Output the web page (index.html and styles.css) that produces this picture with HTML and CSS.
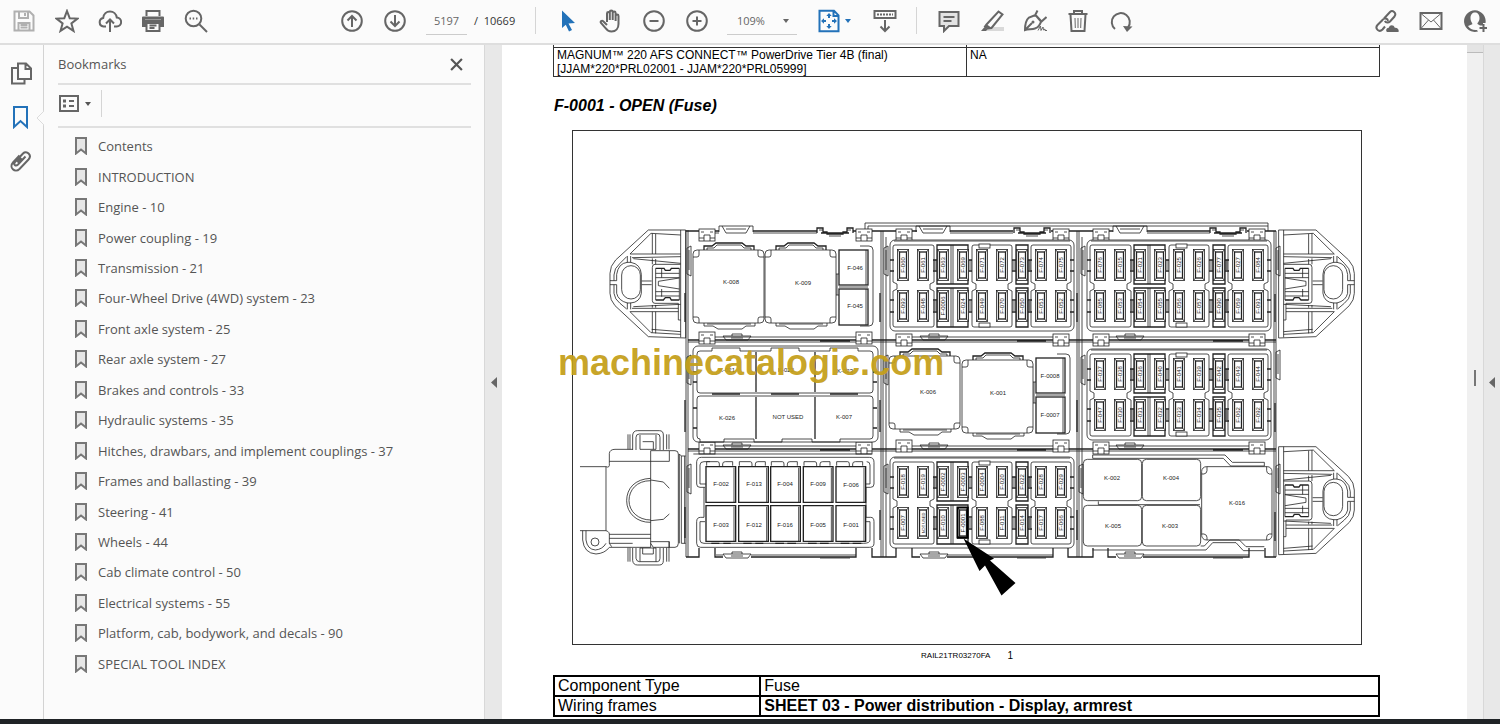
FILE: index.html
```html
<!DOCTYPE html>
<html lang="en">
<head>
<meta charset="utf-8">
<title>Service manual - Bookmarks</title>
<link rel="stylesheet" href="styles.css">
</head>
<body>
<header class="toolbar">
  <div class="group">
    <button class="tool faded" aria-label="Save"><svg class="icon" viewBox="0 0 24 24"><path d="M2.500 2.500h15l4 4v15h-19zM7 3v6h9V3M6.500 21v-7h11v7M13 4v3M8.500 16h7M8.500 18.500h7"/></svg></button>
    <button class="tool" aria-label="Star"><svg class="icon" viewBox="0 0 24 24"><path d="M12 2l2.700 7.200 7.800.4-6.100 4.800 2.100 7.500-6.500-4.300-6.500 4.300 2.100-7.500L1.500 9.600l7.800-.4z"/></svg></button>
    <button class="tool" aria-label="Upload"><svg class="icon" viewBox="0 0 24 24"><path d="M8 17.500H5.500a4.300 4.300 0 0 1-.3-8.500C5.500 5 8.500 2.500 12 2.500S18.300 5 18.800 8.500a4.500 4.500 0 0 1-.3 9H16M12 23V11M8 14.500l4-4 4 4"/></svg></button>
    <button class="tool" aria-label="Print"><svg class="icon" viewBox="0 0 24 24"><path class="solid" d="M2 7.500h20a1 1 0 0 1 1 1V18h-4v-4H5v4H1V8.500a1 1 0 0 1 1-1z"/><path d="M5.500 7V2h13v5M5.500 14v8h13v-8zM8.500 16.500h7M8.500 19h5"/><path class="knock" d="M4 10.500h16"/></svg></button>
    <button class="tool" aria-label="Search"><svg class="icon" viewBox="0 0 24 24"><circle cx="9.500" cy="9.500" r="7.800"/><path d="M15.500 15.500l7.500 7.500"/><path d="M5.500 9.500h1.500M8.700 9.500h1.500M12 9.500h1.500"/></svg></button>
  </div>
  <div class="group pager">
    <button class="tool" aria-label="Previous page"><svg class="icon" viewBox="0 0 24 24"><circle cx="12" cy="12" r="9.800"/><path d="M12 18V7M7.500 11.500L12 7l4.500 4.500"/></svg></button>
    <button class="tool" aria-label="Next page"><svg class="icon" viewBox="0 0 24 24"><circle cx="12" cy="12" r="9.800"/><path d="M12 6v11M7.500 12.500L12 17l4.500-4.500"/></svg></button>
    <input class="page-no" type="text" value="5197" aria-label="Page number">
    <span class="page-total">/&nbsp; 10669</span>
  </div>
  <span class="sep"></span>
  <div class="group">
    <button class="tool blue" aria-label="Select"><svg class="icon" viewBox="0 0 24 24"><path class="solid" d="M6 1.500l13 12.500-6.500.5 3.500 6.500-3 1.500-3.200-6.800L6 19z"/></svg></button>
    <button class="tool" aria-label="Hand"><svg class="icon" viewBox="0 0 24 24"><path d="M8 13V4.500a1.400 1.400 0 0 1 2.800 0V11 3a1.400 1.400 0 0 1 2.900 0v8-7a1.400 1.400 0 0 1 2.900 0v8-5a1.400 1.400 0 0 1 2.900 0v8c0 4-2.500 7.500-7 7.500-3 0-4.500-1.200-6-3.500l-4.500-5c-1-1.500.8-3 2.200-1.800L8 16"/></svg></button>
    <button class="tool" aria-label="Zoom out"><svg class="icon" viewBox="0 0 24 24"><circle cx="12" cy="12" r="9.800"/><path d="M7.500 12h9"/></svg></button>
    <button class="tool" aria-label="Zoom in"><svg class="icon" viewBox="0 0 24 24"><circle cx="12" cy="12" r="9.800"/><path d="M7.500 12h9M12 7.500v9"/></svg></button>
  </div>
  <div class="zoom">
    <select aria-label="Zoom level"><option>109%</option></select>
    <svg class="caret" viewBox="0 0 6 4"><path d="M0 0h6L3 4z"/></svg>
  </div>
  <button class="fit blue" aria-label="Fit page"><svg class="icon" viewBox="0 0 24 24"><path d="M2.500 1.800h14.500l4.500 4.500v16h-19zM16.500 2v5h5M12 5v4M12 15v4M5.500 12h3.500M15 12h3.500"/><path class="solid" d="M12 4l2.700 3H9.300zM12 20l2.700-3H9.300zM4 12l3-2.700v5.400zM20 12l-3-2.700v5.400z"/></svg><svg class="caret" viewBox="0 0 6 4"><path d="M0 0h6L3 4z"/></svg></button>
  <button class="tool" aria-label="Read mode"><svg class="icon" viewBox="0 0 24 24"><path d="M1.500 2h21v7h-21zM12 11v11M7.500 17.500L12 22l4.500-4.500"/><path class="dots" d="M4 5.500h16"/></svg></button>
  <span class="sep"></span>
  <div class="group">
    <button class="tool" aria-label="Comment"><svg class="icon" viewBox="0 0 24 24"><path class="tint" d="M2.500 3h19v14H12l-5 5v-5H2.500zM6.500 8h11M6.500 12h8"/></svg></button>
    <button class="tool" aria-label="Highlight"><svg class="icon" viewBox="0 0 24 24"><path class="shade" d="M9 18h15v4H6z"/><path d="M6.500 15.500L18.500 2.500l4 3-11 13.500-4 .5-2.500-2zM6 16l5 3.500"/><path class="solid" d="M4.500 18l3 2.500L6 22H1z"/></svg></button>
    <button class="tool" aria-label="Sign"><svg class="icon" viewBox="0 0 24 24"><path d="M2 21C2 16 3 11 6 8.500l6.500-2.500 5.500 6.500c-1 4-3 6-6 7C9 20.500 5 20 2 21zM2 21l7-7M12 6.500L14.500 1.500M12.500 6l6 6.500 5-4.500"/><path class="thin" d="M15 21.500l2.500-4.500.5 4.500 2-3.500.5 3 1.500-1v1.500h2"/><circle class="solid" cx="10" cy="13" r="1.500"/></svg></button>
    <button class="tool" aria-label="Delete"><svg class="icon" viewBox="0 0 24 24"><path d="M2.500 5h19M8 5V2h8v3M4.500 5.500l1 16.500h13l1-16.500"/><path class="thin" d="M9 9l.3 10M12 9v10M15 9l-.3 10"/></svg></button>
    <button class="tool" aria-label="Rotate"><svg class="icon" viewBox="0 0 24 24"><path d="M6 20a9 9 0 1 1 13-1.500"/><path class="solid" d="M14 17l9.500.5-5.500 5.500z"/></svg></button>
  </div>
  <div class="group share">
    <button class="tool" aria-label="Share link"><svg class="icon" viewBox="0 0 24 24"><path d="M9 9.500l6-6.500c2.500-2.500 7 1 4.500 4.500l-4.500 5c-1.500 1.500-4 1.500-5.200-.5M13 12l-.5-1.500c-1.500-1.500-4-1-5 .5L2.500 16c-3 3.500 1.500 8 5 4.500L10 17.500"/><path class="solid" d="M12 23c-2-2 0-4.500 1.800-4.200.8-3.300 5-3.300 6 0 3-.3 4.500 2 3.700 4.200z"/></svg></button>
    <button class="tool" aria-label="Mail"><svg class="icon" viewBox="0 0 24 24"><path d="M1.500 4h21v16h-21z"/><path class="thin" d="M2 4.500l10 8.500 10-8.500M2 19.500l7.500-8.500M22 19.500L14.500 11"/></svg></button>
    <button class="tool" aria-label="Account"><svg class="icon" viewBox="0 0 24 24"><path class="solid" d="M15 22.500A10.800 10.800 0 1 1 22.500 14h-2.500v2.500h-3l-2.500-1.500c-.5-1.200 2-2 2-6 0-3.500-2-5.500-4.500-5.500S7.500 5.500 7.500 9c0 4 2.300 5 1.800 6.200L5 17c2 3 5 4.500 9 4z"/><path d="M20.500 15v8M16.500 19h8"/></svg></button>
  </div>
</header>

<main class="workspace">
  <nav class="rail" aria-label="Panels">
    <button class="rail-btn" aria-label="Pages"><svg class="icon" viewBox="0 0 24 24"><path d="M9 2.500h8l5 5V18H9zM16.500 3v5h5M9 7H3v15.500h12.500V18.500"/></svg></button>
    <button class="rail-btn blue" aria-label="Bookmarks"><svg class="icon" viewBox="0 0 24 24"><path d="M5 2h13v20L11.500 16 5 22z"/></svg></button>
    <button class="rail-btn" aria-label="Attachments"><svg class="icon" viewBox="0 0 24 24"><path d="M16.500 7.500l-7.500 8c-2.500 2.500-5-.3-3-2.500L14 4.500c3.500-3.500 9.500 1.500 5.500 6l-9 9.500c-4.500 4.500-11-1.500-6.500-6.500l6.500-7M12.500 9l-4 4.500"/></svg></button>
    <svg class="notch" viewBox="0 0 8 16"><path d="M8 0v1L1 8l7 7v1"/></svg>
  </nav>

  <aside class="panel">
    <div class="panel-head">
      <h2>Bookmarks</h2>
      <button class="close" aria-label="Close"><svg viewBox="0 0 12 12"><path d="M1 1l10 10M11 1L1 11"/></svg></button>
    </div>
    <div class="panel-tools">
      <button class="options" aria-label="Options"><svg class="list-icon" viewBox="0 0 20 17"><path d="M1 1h18v15H1zM10 6h5M10 11h5"/><path class="solid" d="M4 4.500h3v3H4zM4 9.500h3v3H4z"/></svg><svg class="caret" viewBox="0 0 6 4"><path d="M0 0h6L3 4z"/></svg></button>
    </div>
    <svg class="defs" aria-hidden="true"><symbol id="mark" viewBox="0 0 12 18"><path d="M1 1h10v15.500L6 12.500l-5 4z"/></symbol></svg>
    <ul class="bookmarks">
      <li><a href="#b1"><svg><use href="#mark"/></svg>Contents</a></li>
      <li><a href="#b2"><svg><use href="#mark"/></svg>INTRODUCTION</a></li>
      <li><a href="#b3"><svg><use href="#mark"/></svg>Engine - 10</a></li>
      <li><a href="#b4"><svg><use href="#mark"/></svg>Power coupling - 19</a></li>
      <li><a href="#b5"><svg><use href="#mark"/></svg>Transmission - 21</a></li>
      <li><a href="#b6"><svg><use href="#mark"/></svg>Four-Wheel Drive (4WD) system - 23</a></li>
      <li><a href="#b7"><svg><use href="#mark"/></svg>Front axle system - 25</a></li>
      <li><a href="#b8"><svg><use href="#mark"/></svg>Rear axle system - 27</a></li>
      <li><a href="#b9"><svg><use href="#mark"/></svg>Brakes and controls - 33</a></li>
      <li><a href="#b10"><svg><use href="#mark"/></svg>Hydraulic systems - 35</a></li>
      <li><a href="#b11"><svg><use href="#mark"/></svg>Hitches, drawbars, and implement couplings - 37</a></li>
      <li><a href="#b12"><svg><use href="#mark"/></svg>Frames and ballasting - 39</a></li>
      <li><a href="#b13"><svg><use href="#mark"/></svg>Steering - 41</a></li>
      <li><a href="#b14"><svg><use href="#mark"/></svg>Wheels - 44</a></li>
      <li><a href="#b15"><svg><use href="#mark"/></svg>Cab climate control - 50</a></li>
      <li><a href="#b16"><svg><use href="#mark"/></svg>Electrical systems - 55</a></li>
      <li><a href="#b17"><svg><use href="#mark"/></svg>Platform, cab, bodywork, and decals - 90</a></li>
      <li><a href="#b18"><svg><use href="#mark"/></svg>SPECIAL TOOL INDEX</a></li>
    </ul>
  </aside>

  <button class="splitter" aria-label="Collapse panel"><svg viewBox="0 0 6 11"><path d="M6 0v11L0 5.500z"/></svg></button>

  <article class="document">
    <table class="models">
      <tr class="cut"><td></td><td></td></tr>
      <tr><td>MAGNUM™ 220 AFS CONNECT™ PowerDrive Tier 4B (final)<br>[JJAM*220*PRL02001 - JJAM*220*PRL05999]</td><td>NA</td></tr>
    </table>
    <h1>F-0001 - OPEN (Fuse)</h1>
    <figure>
      <div class="drawing">
        <svg class="diagram" viewBox="573 131 788 513" role="img" aria-label="Fuse and relay box">
          <defs>
            <g id="fuse"><rect x="-5.500" y="-15.500" width="11" height="31"/><rect class="bold" x="-3.500" y="-13" width="7" height="26"/><path d="M-5.500 -15.500l2 2.500M5.500 -15.500l-2 2.500M-5.500 15.500l2-2.500M5.500 15.500l-2-2.500"/></g>
            <g id="row"><use href="#fuse" x="13"/><use href="#fuse" x="33"/><use href="#fuse" x="53"/><use href="#fuse" x="73"/><use href="#fuse" x="92"/><use href="#fuse" x="112"/><use href="#fuse" x="132"/><use href="#fuse" x="151"/><use href="#fuse" x="171"/></g>
            <g id="bank">
              <rect x="0" y="0" width="184" height="91" rx="5"/>
              <path d="M4 1h176M44 20v10M46 20v10M79 20v10M81 20v10M123 20v10M125 20v10M139 20v10M140 20v10M44 61v10M46 61v10M79 61v10M81 61v10M123 61v10M125 61v10M139 61v10M140 61v10"/>
              <path d="M5 5h37q2 0 2 2v35l-4 2v5l4 2v34q0 2-2 2H5q-2 0-2-2V51l4-2v-5l-4-2V7q0-2 2-2z"/>
              <path class="bold" d="M47 5h31v39H47zM47 48h31v39H47zM126 5h12v39h-12zM126 48h12v39h-12z"/>
              <path d="M61 5v39M63 5v39M61 48v39M63 48v39"/>
              <path d="M84 5h36q2 0 2 2v35l-4 2v5l4 2v34q0 2-2 2H84q-2 0-2-2V51l4-2v-5l-4-2V7q0-2 2-2zM143 5h36q2 0 2 2v35l-4 2v5l4 2v34q0 2-2 2h-36q-2 0-2-2V51l4-2v-5l-4-2V7q0-2 2-2z"/>
              <rect x="89" y="4" width="11" height="4"/><rect x="89" y="83" width="11" height="4"/>
              <path class="bold" d="M0 20h4M0 31h4M180 20h4M180 31h4M0 60h4M0 72h4M180 60h4M180 72h4M43 20h4M43 31h4M78 20h4M78 31h4M122 20h4M122 31h4M138 20h4M138 31h4M43 60h4M43 72h4M78 60h4M78 72h4M122 60h4M122 72h4M138 60h4M138 72h4"/>
              <use href="#row" y="25"/><use href="#row" y="66"/>
            </g>
            <g id="relay">
              <rect x="0" y="0" width="71" height="73" rx="4"/>
              <path d="M0 7h4q2 0 2-2V0M71 7h-4q-2 0-2-2V0M0 67h4q2 0 2 2v4M71 67h-4q-2 0-2 2v4"/>
              <path class="bold" d="M11 0v-4h8l4-3h26l4 3h8v4"/><path d="M14 0v-2h7l3-3h24l3 3h7v2M11 73v3h9l5 3h24l4-3h9v-3M14 74h44"/>
            </g>
            <g id="pair">
              <rect class="bold" x="0" y="0" width="29" height="35"/><rect class="bold" x="0" y="39" width="29" height="36"/>
              <path d="M21-4h9q4 0 4 4v72q0 4-4 4h-9M-3 24h3M-3 45h3M-2 24v21M0 37h29M27 0v35M27 39v36"/>
            </g>
            <g id="handle"><path d="M0 7V1h34v6M3 1l4 7h20l4-7M7 4h20"/></g>
            <g id="foot"><path d="M0 1h28l-3 4H3zM8 3h12"/><path d="M9 1V-1h10v2"/></g>
            <g id="latch"><path class="bold" d="M0 6V1h6v4h4v2h16V5h4V1h6v5M4 6h28"/><path d="M2 3h4M30 3h4M12 9h12"/></g>
            <g id="snap"><rect x="0" y="0" width="16" height="12"/><path d="M0 9h5V6h6v3h5M2 3h3M11 3h3M5 9v3M11 9v3"/></g>
            <g id="leaf"><path d="M0 0v26l4 2V-2zM2 2v20"/></g>
            <g id="bracket">
              <path d="M347 60H235L137 150Q120 168 120 190V250Q120 270 135 287L235 380L347 384"/>
              <path d="M332 60V382M347 60V384M247 70V132M257 72V132M247 145V163M257 147V163M247 285V293M257 285V293M247 305V368M257 305V370"/>
              <path d="M332 75L243 70L180 132H332M186 143L332 140M190 146L332 160M190 290L332 283M186 295H325M180 305H325M180 305L243 368L332 373M332 365L245 358"/>
              <path d="M170 140L150 160Q132 175 132 195V212H120M120 224H132V250Q134 268 150 280L170 297M172 138V158M182 138V158M172 278V298M182 278V298"/>
              <rect x="155" y="167" width="56" height="100" rx="28"/>
              <path d="M140 212V193Q145 160 172 157H182Q212 162 214 193V250Q210 277 182 279H172Q145 272 140 250V224M132 212H140M132 224H140M215 213H245M215 224H245"/>
              <path d="M332 163H255Q247 163 247 172V272Q247 280 255 280H325V330H332"/>
              <path class="bold3" d="M257 175H282L286 181H300L304 175H328M257 270H280L286 263H300L304 270H328"/>
              <path d="M257 175V270M328 175V270M257 190H328M275 175V203M257 203H328M265 214L328 204M265 214V227L328 237M257 245H328M275 237V260M257 258H328"/>
            </g>
            <g id="fbox"><path class="bold3" d="M0 0H89V107H0z"/><path d="M84 3V107"/></g>
            <g id="tabs"><path d="M2-3V-15H35Q40-15 40-8V0M50 0V-8Q50-15 58-15H80V-3"/></g>
          </defs>

          <g class="ink">
            <!-- housing rails -->
            <path d="M686 230V557M688 230V557M881 231V557M883 231V557M886 237V557M1077 231V557M1079 231V557M1082 237V557M1274 231V557M1276 231V557"/>
            <path class="bold" d="M686 231H719M753 231H817M853 231H917M950 231H1013M1051 231H1113M1147 231H1210M1247 231H1276"/>
            <path d="M700 233H719M753 233H817M950 233H1013M1147 233H1210M865 238V223H1268V231M868 238V226H1268"/>
            <path class="bold" d="M688 340H1276M688 449H1276M820 341H850M1017 341H1046M1213 341H1243M820 450H850M1017 450H1046M1213 450H1243"/>
            <path d="M688 342H1276M688 451H1276M715 337H856M912 337H1053M1108 337H1249M715 446H856M912 446H1053M1108 446H1249"/>
            <path class="bold" d="M686 557H699V548M715 548V557H723M751 557H856V548M872 548V557H896V548M912 548V557H920M947 557H1053V548M1068 548V557H1093V548M1108 548V557H1116M1143 557H1249V548M1265 548V557H1276"/>
            <path d="M716 555H723M751 555H856M947 555H1053M1143 555H1249M820 558H850M1017 558H1046M1213 558H1243"/>
            <path class="bold" d="M685 293V322M880 293V322M1077 293V322M685 400V432M880 400V432M1077 400V432M685 507V538M880 510V540M1077 510V540M1275 294V322M1275 403V432M1275 512V541"/>
            <use href="#handle" x="719" y="225"/><use href="#handle" x="916" y="225"/><use href="#handle" x="1113" y="225"/>
            <use href="#latch" x="817" y="227"/><use href="#latch" x="1014" y="227"/><use href="#latch" x="1210" y="227"/>
            <use href="#foot" x="723" y="335"/><use href="#foot" x="920" y="335"/><use href="#foot" x="1116" y="335"/>
            <use href="#foot" x="723" y="444"/><use href="#foot" x="920" y="444"/><use href="#foot" x="1116" y="444"/>
            <use href="#foot" x="723" y="553"/><use href="#foot" x="920" y="553"/><use href="#foot" x="1116" y="553"/>
            <use href="#snap" x="699" y="229"/><use href="#snap" x="856" y="229"/><use href="#snap" x="896" y="229"/><use href="#snap" x="1053" y="229"/><use href="#snap" x="1093" y="229"/><use href="#snap" x="1249" y="229"/>
            <use href="#snap" x="699" y="332"/><use href="#snap" x="856" y="332"/><use href="#snap" x="896" y="334"/><use href="#snap" x="1053" y="334"/><use href="#snap" x="1093" y="334"/><use href="#snap" x="1249" y="334"/>
            <use href="#snap" x="699" y="442"/><use href="#snap" x="856" y="442"/><use href="#snap" x="896" y="440"/><use href="#snap" x="1053" y="440"/><use href="#snap" x="1093" y="442"/><use href="#snap" x="1249" y="442"/>
            <use href="#leaf" x="687" y="248"/><use href="#leaf" x="884" y="248"/><use href="#leaf" x="1081" y="248"/><use href="#leaf" x="1276" y="248"/>
            <use href="#leaf" x="687" y="357"/><use href="#leaf" x="884" y="357"/><use href="#leaf" x="1081" y="357"/><use href="#leaf" x="1276" y="352"/>
            <use href="#leaf" x="687" y="466"/><use href="#leaf" x="884" y="466"/><use href="#leaf" x="1079" y="466"/><use href="#leaf" x="1276" y="466"/>

            <!-- mounting brackets -->
            <use href="#bracket" class="fine" transform="translate(570 210) scale(.33333)"/>
            <use href="#bracket" class="fine" transform="translate(1394.300 210) scale(-.33333 .33333)"/>
            <use href="#bracket" class="fine" transform="translate(1394.300 426.700) scale(-.33333 .33333)"/>

            <use href="#bank" x="890" y="240"/><use href="#bank" x="1087" y="240"/><use href="#bank" x="1087" y="349"/><use href="#bank" x="890" y="457"/>
            <use href="#relay" x="693" y="250"/><use href="#relay" x="765" y="250"/><use href="#relay" x="889" y="356"/><use href="#relay" x="962" y="360"/>
            <use href="#pair" x="839" y="250"/><use href="#pair" x="1036" y="358"/>

            <!-- six relay block -->
            <rect x="693" y="346" width="185" height="96" rx="5"/>
            <path d="M697 354q0-3 3-3h12v-3h28v3h31v-3h28v3h31v-3h28v3h12q3 0 3 3v36q0 3-3 3H700q-3 0-3-3zM697 399q0-3 3-3h170q3 0 3 3v37q0 3-3 3h-30v3h-28v-3h-30v3h-28v-3h-30v3h-24v-3q-3 0-3-3z"/>
            <path class="bold" d="M756 352V392M815 352V392M756 397V439M815 397V439M712 394H740M771 394H799M830 394H858M693 372h4M693 382h4M693 408h4M693 428h4M873 372h4M873 382h4M873 408h4M873 428h4"/>

            <!-- ten fuse block and harness entry -->
            <g class="fine" transform="translate(570 380) scale(.33333)">
              <path d="M405 322H390Q380 322 380 312V245Q382 232 394 232H898Q912 232 912 247V312Q912 322 902 322H888V412H902Q912 412 912 425V490Q912 502 898 502H392Q380 502 380 490V425Q380 412 392 412H402V322M390 312V255Q390 245 402 245H420M900 312V255Q900 245 890 245M390 425V480Q390 490 402 490H880Q900 490 900 480V425M408 312H390M888 312H900M390 425H405M888 425H900M370 222H905"/>
              <use href="#tabs" x="408" y="260"/><use href="#tabs" x="506" y="260"/><use href="#tabs" x="602" y="260"/><use href="#tabs" x="700" y="260"/><use href="#tabs" x="798" y="260"/>
              <use href="#fbox" x="408" y="260"/><use href="#fbox" x="506" y="260"/><use href="#fbox" x="602" y="260"/><use href="#fbox" x="700" y="260"/><use href="#fbox" x="798" y="260"/>
              <use href="#fbox" x="408" y="377"/><use href="#fbox" x="506" y="377"/><use href="#fbox" x="602" y="377"/><use href="#fbox" x="700" y="377"/><use href="#fbox" x="798" y="377"/>
              <path class="bold3" d="M424 490H448M460 490H482M520 490H545M556 490H580M616 490H642M652 490H678M714 490H740M750 490H776M812 490H838M848 490H874"/>
              <path d="M30 260H108V452H30M38 452V480Q42 520 78 522Q105 520 118 502H242M48 452V480Q52 508 76 510Q98 508 108 490M108 260Q120 265 118 250V220Q120 208 135 208H188M118 244H298M188 210V165Q190 152 202 152H268Q280 152 280 165V210M198 210V172Q198 162 208 162H262Q270 162 270 172V210M210 165V208H258V165M218 185H250V208M174 163V208M180 163V208M290 163V208M297 163V208M242 212V502M242 212H298V244M298 212H315Q325 212 325 222V490Q325 502 315 502H250L242 490M108 452Q120 455 118 468V490L125 500M118 463H242M118 475H242M118 490H188M328 222V490M334 228V490M344 228V490M328 222L334 228H347M334 490H347"/>
              <path d="M242 295C195 297 170 325 170 362S200 428 242 427M242 302C200 302 177 330 177 362S205 420 242 420M242 300L280 306L298 325M242 422L280 418L298 402"/>
              <circle cx="75" cy="486" r="12"/>
              <path d="M188 504V542Q190 555 202 555H268Q280 555 280 542V504M198 504V535Q200 545 208 545H262Q270 545 270 535V504M210 545V504H258V545M218 504V522H250V504M174 503V545M180 503V545M290 503V545M297 485V545M242 485H298V502"/>
            </g>

            <!-- cab relays -->
            <g class="fine" transform="translate(1070 380) scale(.33333)">
              <rect x="40" y="238" width="175" height="124" rx="12"/><rect x="217" y="238" width="175" height="124" rx="12"/>
              <rect x="40" y="376" width="175" height="122" rx="12"/><rect x="217" y="376" width="175" height="122" rx="12"/>
              <rect x="395" y="260" width="211" height="220" rx="14"/>
              <path d="M395 282H402Q411 280 411 272V260M606 282H598Q590 280 590 272V260M395 462H402Q411 464 411 472V480M606 462H598Q590 464 590 472V480M85 364V374H390M68 235H460L482 258H583V247H487L465 225H68zM392 498H403L420 480H508L528 500H583M68 510H408L428 488H498L520 512H583"/>
            </g>
          </g>

          <path class="pointer" d="M963.500 538.500L994 558.500 990 560.500 1015.500 583 1001.500 595.500 985 565.500 979.500 571z"/>
          <rect class="target" x="957.500" y="507.500" width="10" height="30"/>

          <g class="label">
            <text x="731" y="284">K-008</text><text x="803" y="285">K-009</text><text x="855" y="270">F-046</text><text x="855" y="308">F-045</text>
            <text x="727" y="372">K-021</text><text x="786" y="372">K-022</text><text x="845" y="373">K-023</text>
            <text x="727" y="420">K-026</text><text x="788" y="419">NOT USED</text><text x="844" y="419">K-007</text>
            <text x="721" y="486">F-002</text><text x="754" y="486">F-013</text><text x="785" y="486">F-004</text><text x="818" y="486">F-009</text><text x="851" y="487">F-006</text>
            <text x="721" y="527">F-003</text><text x="754" y="527">F-012</text><text x="785" y="527">F-016</text><text x="818" y="527">F-005</text><text x="851" y="527">F-001</text>
            <text x="928" y="394">K-006</text><text x="998" y="395">K-001</text><text x="1050" y="378">F-0008</text><text x="1050" y="417">F-0007</text>
            <text x="1112" y="480">K-002</text><text x="1171" y="480">K-004</text><text x="1113" y="528">K-005</text><text x="1170" y="528">K-003</text><text x="1237" y="505">K-016</text>
            <g transform="translate(890 265) rotate(-90)"><text><tspan x="0" y="15">F-060</tspan><tspan x="0" y="35">F-061</tspan><tspan x="0" y="55">F-063</tspan><tspan x="0" y="75">F-069</tspan><tspan x="0" y="94">F-071</tspan><tspan x="0" y="114">F-072</tspan><tspan x="0" y="134">F-073</tspan><tspan x="0" y="153">F-074</tspan><tspan x="0" y="173">F-075</tspan></text></g>
            <g transform="translate(890 306) rotate(-90)"><text><tspan x="0" y="15">F-093</tspan><tspan x="0" y="35">F-048</tspan><tspan x="0" y="55">F-0006</tspan><tspan x="0" y="75">F-024</tspan><tspan x="0" y="94">F-049</tspan><tspan x="0" y="114">F-070</tspan><tspan x="0" y="134">F-050</tspan><tspan x="0" y="153">F-051</tspan><tspan x="0" y="173">F-052</tspan></text></g>
            <g transform="translate(1087 265) rotate(-90)"><text><tspan x="0" y="15">F-076</tspan><tspan x="0" y="35">F-015</tspan><tspan x="0" y="55">F-021</tspan><tspan x="0" y="75">F-023</tspan><tspan x="0" y="94">F-025</tspan><tspan x="0" y="114">F-026</tspan><tspan x="0" y="134">F-077</tspan><tspan x="0" y="153">F-027</tspan><tspan x="0" y="173">F-084</tspan></text></g>
            <g transform="translate(1087 306) rotate(-90)"><text><tspan x="0" y="15">F-085</tspan><tspan x="0" y="35">F-053</tspan><tspan x="0" y="55">F-054</tspan><tspan x="0" y="75">F-055</tspan><tspan x="0" y="94">F-056</tspan><tspan x="0" y="114">F-057</tspan><tspan x="0" y="134">F-090</tspan><tspan x="0" y="153">F-059</tspan><tspan x="0" y="173">F-091</tspan></text></g>
            <g transform="translate(1087 374) rotate(-90)"><text><tspan x="0" y="15">F-037</tspan><tspan x="0" y="35">F-038</tspan><tspan x="0" y="55">F-036</tspan><tspan x="0" y="75">F-040</tspan><tspan x="0" y="94">F-041</tspan><tspan x="0" y="114">F-039</tspan><tspan x="0" y="134">F-042</tspan><tspan x="0" y="153">F-043</tspan><tspan x="0" y="173">F-044</tspan></text></g>
            <g transform="translate(1087 415) rotate(-90)"><text><tspan x="0" y="15">F-047</tspan><tspan x="0" y="35">F-030</tspan><tspan x="0" y="55">F-031</tspan><tspan x="0" y="75">F-032</tspan><tspan x="0" y="94">F-033</tspan><tspan x="0" y="114">F-034</tspan><tspan x="0" y="134">F-035</tspan><tspan x="0" y="153">F-062</tspan><tspan x="0" y="173">F-092</tspan></text></g>
            <g transform="translate(890 482) rotate(-90)"><text><tspan x="0" y="15">F-018</tspan><tspan x="0" y="35">F-019</tspan><tspan x="0" y="55">F-0002</tspan><tspan x="0" y="75">F-0003</tspan><tspan x="0" y="94">F-0004</tspan><tspan x="0" y="114">F-020</tspan><tspan x="0" y="134">F-022</tspan><tspan x="0" y="153">F-028</tspan><tspan x="0" y="173">F-029</tspan></text></g>
            <g transform="translate(890 523) rotate(-90)"><text><tspan x="0" y="15">F-007</tspan><tspan class="tiny" x="0" y="35">NOT USED</tspan><tspan x="0" y="55">F-010</tspan><tspan x="0" y="75">F-0001</tspan><tspan x="0" y="94">F-088</tspan><tspan x="0" y="114">F-011</tspan><tspan x="0" y="134">F-014</tspan><tspan x="0" y="153">F-017</tspan><tspan x="0" y="173">F-066</tspan></text></g>
          </g>
        </svg>
      </div>
      <figcaption><span>RAIL21TR03270FA</span><b>1</b></figcaption>
    </figure>
    <table class="component">
      <tr><th>Component Type</th><td>Fuse</td></tr>
      <tr><th>Wiring frames</th><td><strong>SHEET 03 - Power distribution - Display, armrest</strong></td></tr>
    </table>
    <p class="watermark">machinecatalogic.com</p>
  </article>

  <div class="scrollbar"><span class="thumb"></span><span class="grip"></span></div>
  <button class="tools-strip" aria-label="Open tools"><svg viewBox="0 0 6 11"><path d="M6 0v11L0 5.500z"/></svg></button>
</main>
<footer class="taskbar"></footer>
</body>
</html>
```
FILE: styles.css
```css
* { box-sizing: border-box; }

body {
  margin: 0;
  height: 100vh;
  display: flex;
  flex-direction: column;
  overflow: hidden;
  background: #fbfbfb;
  color: #555;
  font-family: "Open Sans", "Noto Sans", sans-serif;
  font-size: 13px;
}

button {
  border: 0;
  padding: 0;
  background: none;
  color: inherit;
  display: flex;
  align-items: center;
  justify-content: center;
}

/* toolbar */
.toolbar {
  flex: none;
  display: flex;
  align-items: center;
  height: 45px;
  padding: 0 4px 2px 2px;
  border-bottom: 2px solid #dedede;
  color: #666;
}
.group { display: flex; align-items: center; }
.tool { width: 43px; height: 41px; flex: none; }
.icon {
  width: 24px;
  height: 24px;
  fill: none;
  stroke: currentColor;
  stroke-width: 2;
}
.icon .thin { stroke-width: 1; }
.icon .dots { stroke-dasharray: 2 1; }
.icon .solid { fill: currentColor; stroke: none; }
.icon .tint { fill: #e3e3e3; }
.icon .shade { fill: #d9d9d9; stroke: none; }
.icon .knock { stroke: #999; stroke-width: 1; }
.faded { color: #b0b0b0; }
.blue { color: #2372b9; }
.pager { margin-left: 113px; }
.page-no {
  width: 41px;
  height: 28px;
  margin-left: 10px;
  padding: 0;
  border: 0;
  border-bottom: 1px solid #ccc;
  background: none;
  color: #666;
  font: 11px "Open Sans", "Noto Sans", sans-serif;
  text-align: center;
}
.page-total { margin-left: 7px; width: 61px; font-size: 11px; color: #333; }
.sep { width: 1px; height: 27px; margin-right: 10px; background: #d5d5d5; flex: none; }
.zoom { position: relative; width: 70px; margin: 0 20px 0 9px; }
.zoom select {
  appearance: none;
  width: 100%;
  height: 28px;
  padding: 0 10px;
  border: 0;
  border-bottom: 1px solid #ccc;
  border-radius: 0;
  background: none;
  color: #666;
  font: 11px "Open Sans", "Noto Sans", sans-serif;
}
.caret { width: 6px; height: 4px; fill: currentColor; }
.zoom .caret { position: absolute; right: 8px; top: 12px; }
.fit { gap: 4px; margin-right: 12px; }
.fit + .tool { margin-right: 10px; }
.share { margin-left: auto; gap: 1px; }

/* workspace */
.workspace { flex: 1; min-height: 0; display: flex; }
.rail {
  position: relative;
  width: 44px;
  flex: none;
  padding-top: 6px;
  border-right: 1px solid #d3d3d3;
  color: #666;
}
.rail .blue { color: #2372b9; }
.rail-btn { width: 41px; height: 44px; }
.notch {
  position: absolute;
  right: -1px;
  top: 65px;
  width: 8px;
  height: 16px;
  fill: #fbfbfb;
  stroke: #dcdcdc;
}
.panel {
  width: 440px;
  flex: none;
  display: flex;
  flex-direction: column;
  padding: 0 13px 40px 14px;
}
.panel-head {
  display: flex;
  align-items: center;
  justify-content: space-between;
  height: 40px;
  padding-right: 8px;
  border-bottom: 2px solid #e0e0e0;
}
.panel h2 { margin: 0; font-size: 13px; font-weight: 400; }
.close svg { width: 13px; height: 13px; fill: none; stroke: #555; stroke-width: 2; }
.panel-tools {
  height: 43px;
  padding: 5px 0 10px;
  border-bottom: 2px solid #e0e0e0;
}
.options { gap: 6px; height: 27px; padding: 0 10px 0 1px; border-right: 1px solid #d5d5d5; }
.list-icon { width: 20px; height: 17px; fill: none; stroke: #666; stroke-width: 2; }
.list-icon .solid { fill: #666; stroke: none; }
.defs { position: absolute; width: 0; height: 0; }
.bookmarks {
  flex: 1;
  display: grid;
  grid-auto-rows: 1fr;
  margin: 0;
  padding: 3px 0 0 17px;
  list-style: none;
}
.bookmarks a {
  height: 100%;
  display: flex;
  align-items: center;
  gap: 11px;
  color: inherit;
  text-decoration: none;
}
.bookmarks svg {
  width: 12px;
  height: 18px;
  fill: #e6e6e6;
  stroke: #777;
  stroke-width: 2;
}
.splitter, .tools-strip {
  width: 18px;
  flex: none;
  background: #e8e8e8;
  border-left: 1px solid #d8d8d8;
}
.tools-strip { width: 17px; }
.splitter svg, .tools-strip svg { width: 6px; height: 11px; fill: #666; }

/* page */
.document {
  position: relative;
  flex: 1;
  min-width: 0;
  padding: 0 87px 0 51px;
  overflow: hidden;
  background: #fff;
  color: #000;
  font-family: "Liberation Sans", Arial, sans-serif;
}
.document table { width: 100%; border-collapse: collapse; table-layout: fixed; }
.models { font-size: 12px; line-height: 14px; }
.models td { border: 1px solid #333; padding: 0 3px; vertical-align: top; }
.models td:first-child { width: 50%; }
.models .cut td { height: 2px; border-top: 0; padding: 0; }
.document h1 {
  margin: 19px 0 15px 1px;
  font-size: 16px;
  line-height: 19px;
  font-style: italic;
}
figure { margin: 0 18px 0 19px; }
.drawing { border: 1px solid #333; }
.diagram { display: block; width: 100%; height: auto; }
.diagram path { fill: none; }
.diagram .bold { stroke-width: 1.3; }
.diagram .bold3 { stroke-width: 4; }
.diagram .pointer { fill: #000; }
.ink { fill: #fff; stroke: #222; stroke-width: .8; }
.fine { stroke-width: 2.4; }
.target { fill: none; stroke: #000; stroke-width: 2; }
.label { font-size: 6px; text-anchor: middle; fill: #222; }
.tiny { font-size: 4px; }
figcaption {
  display: flex;
  justify-content: center;
  align-items: center;
  gap: 17px;
  height: 22px;
  font-size: 8px;
}
figcaption b { font-size: 10px; font-weight: 400; }
.component { margin-top: 8px; font-size: 16px; line-height: 18px; }
.component th, .component td {
  padding: 0 3px;
  border: 2px solid #000;
  text-align: left;
  font-weight: 400;
}
.component th { width: 25%; }
.watermark {
  position: absolute;
  left: 56px;
  top: 298px;
  margin: 0;
  color: #c5a01bf0;
  font-size: 36px;
  line-height: 40px;
  font-weight: 700;
}

.scrollbar {
  width: 16px;
  flex: none;
  display: flex;
  flex-direction: column;
  align-items: center;
  padding-bottom: 16px;
  background: #f0f0f0;
}
.thumb { width: 100%; height: 8px; background: #e4e4e4; border-bottom: 1px solid #bbb; }
.grip { width: 2px; height: 16px; margin: auto 0; background: #777; }
.taskbar { flex: none; height: 5px; background: #1f2326; }
```
